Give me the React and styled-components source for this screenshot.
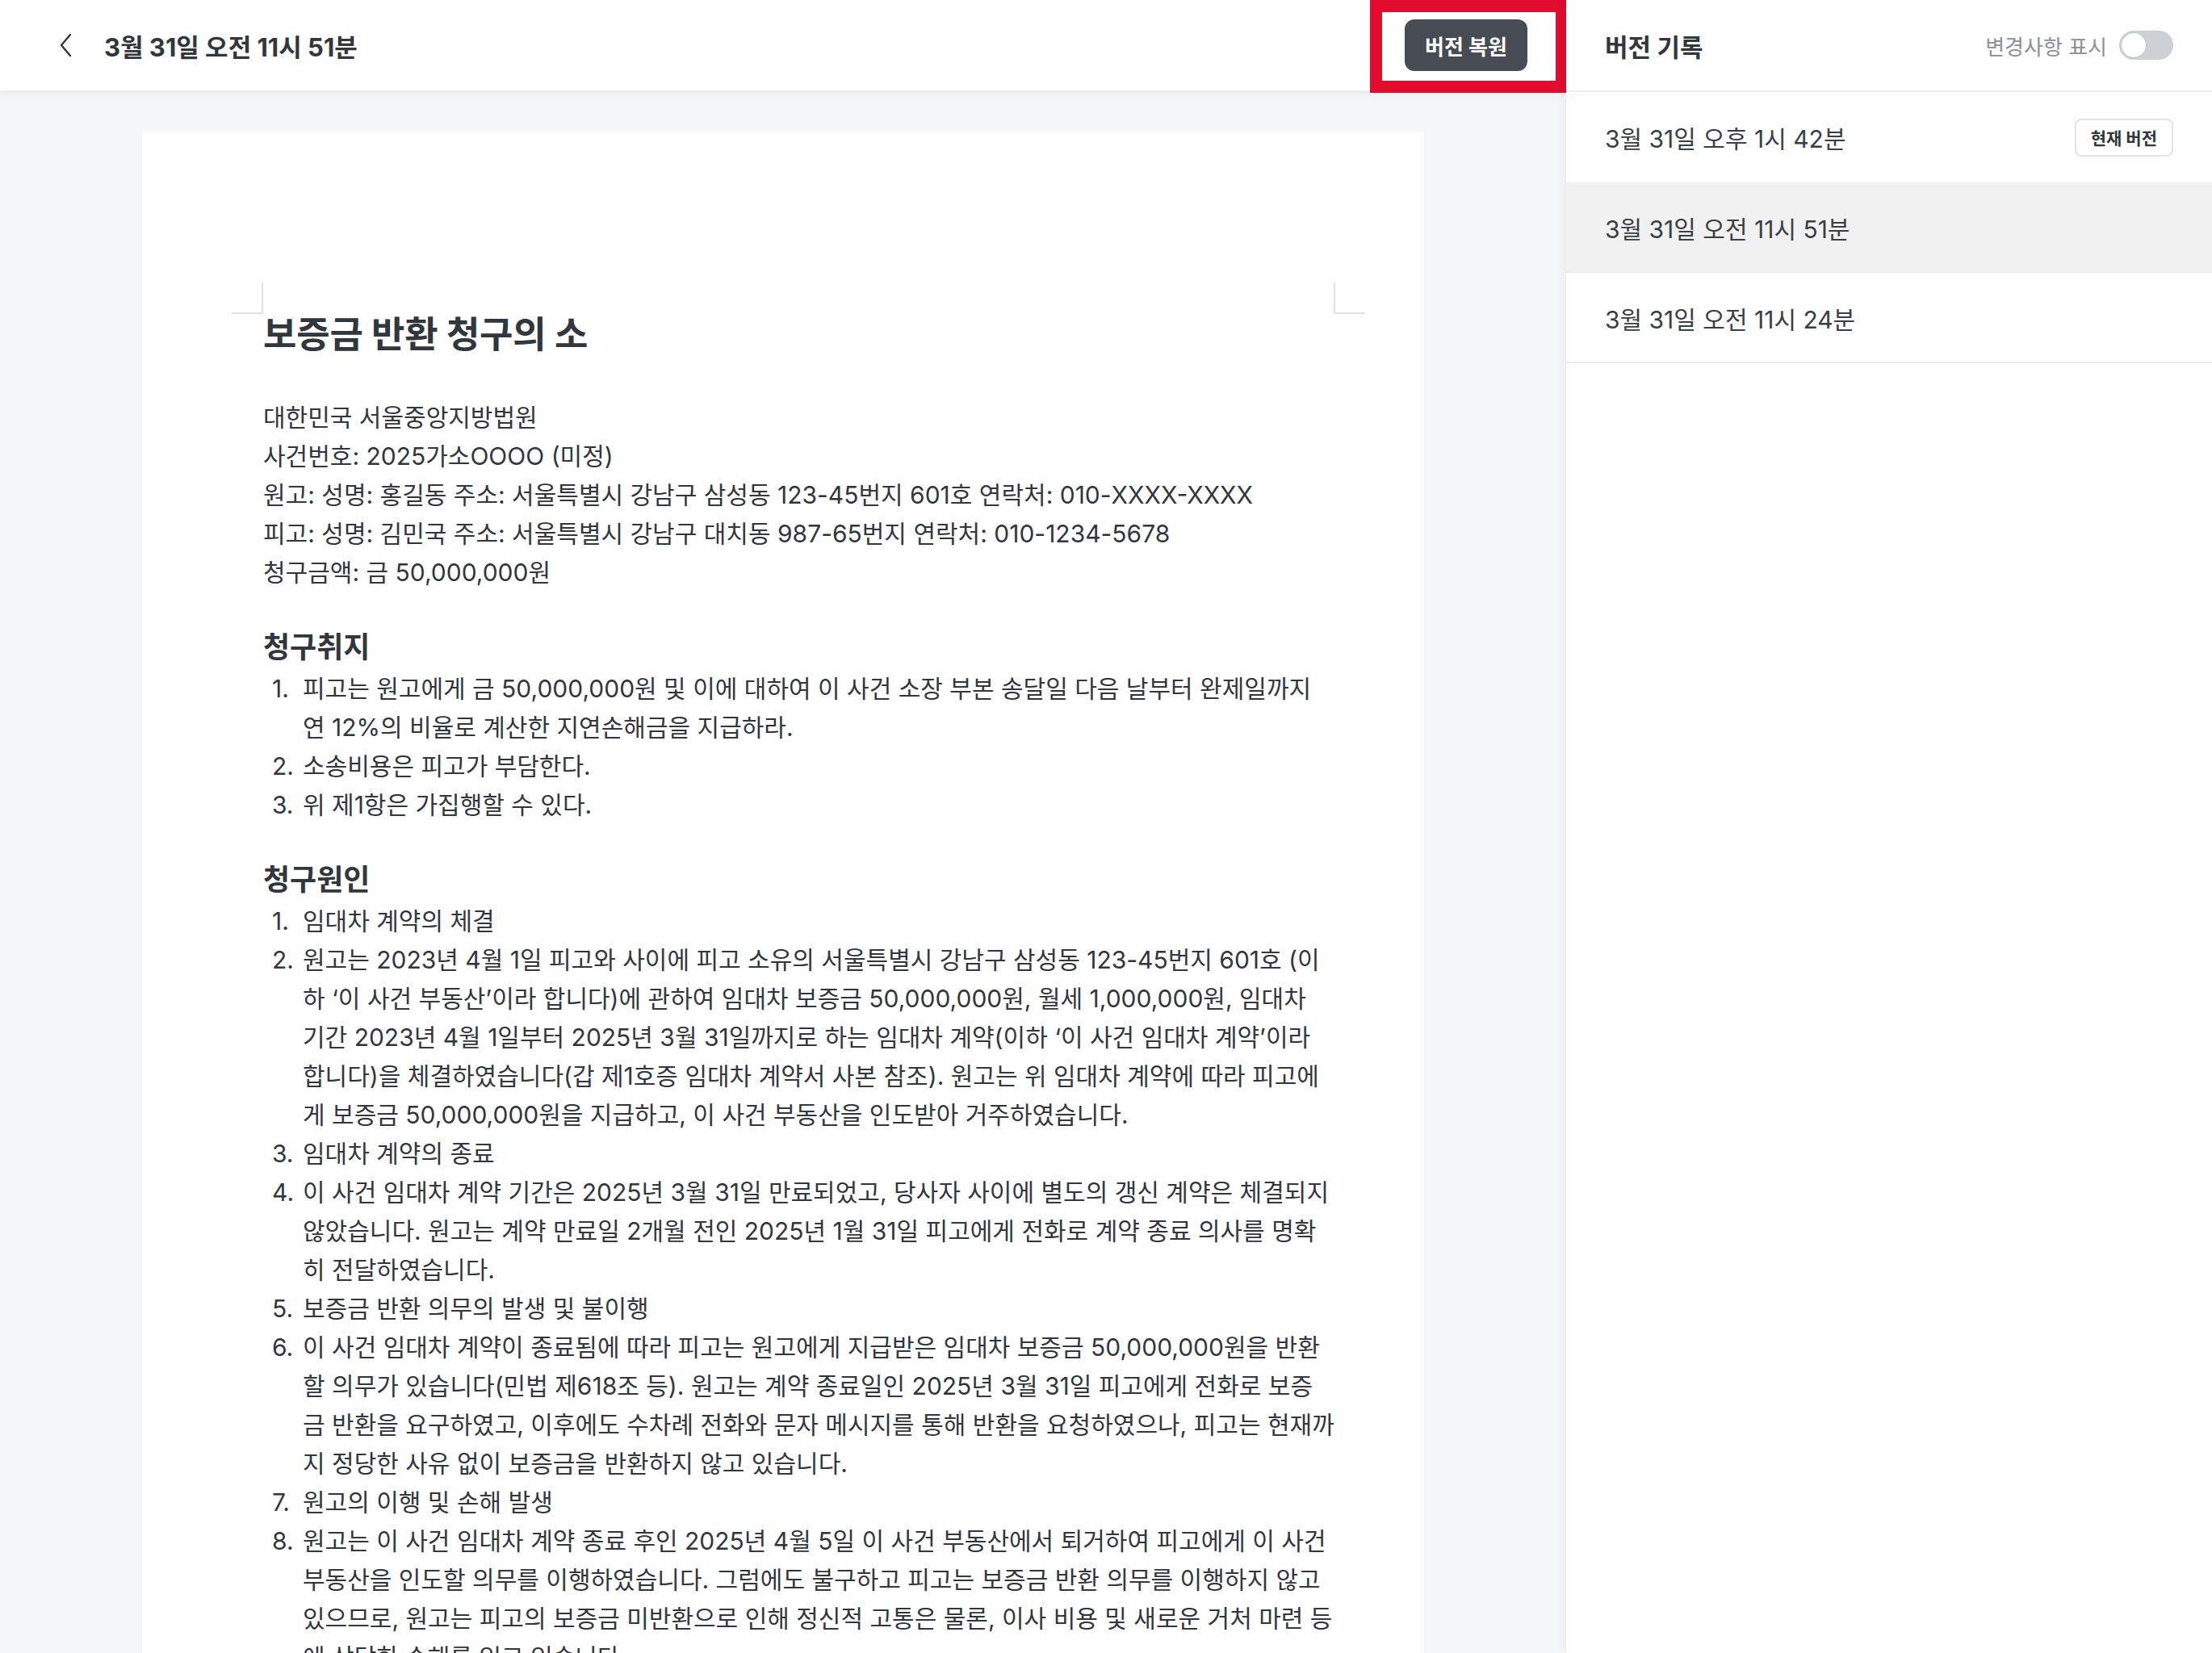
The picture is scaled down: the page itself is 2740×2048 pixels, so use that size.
import React from "react";
import styled, { createGlobalStyle } from "styled-components";

const GlobalStyle = createGlobalStyle`
  html, body {
    margin: 0;
    padding: 0;
    height: 100%;
  }
  body {
    font-family: "Inter", "Noto Sans CJK KR", sans-serif;
    color: #32363d;
    background: #ffffff;
  }
  #root {
    height: 100vh;
    overflow: hidden;
  }
`;

//styled components

const Page = styled.div`
  display: flex;
  height: 100vh;
  overflow: hidden;
`;

const Main = styled.div`
  flex: 1;
  min-width: 0;
  display: flex;
  flex-direction: column;
`;

const TopBar = styled.header`
  position: relative;
  z-index: 2;
  height: 114px;
  box-sizing: border-box;
  display: flex;
  align-items: center;
  padding: 0 48px 0 68px;
  background: #ffffff;
  border-bottom: 2px solid #eeeeee;
  box-shadow: 0 3px 8px rgba(0, 0, 0, 0.05);
`;

const BackButton = styled.button`
  display: flex;
  align-items: center;
  justify-content: center;
  width: 28px;
  height: 40px;
  padding: 0;
  border: none;
  background: none;
  color: #32363d;
  cursor: pointer;
`;

const DocTitle = styled.h1`
  margin: 0 0 0 33px;
  font-size: 31px;
  font-weight: 700;
  color: #32363d;
`;

const Spacer = styled.div`
  flex: 1;
`;

const Highlight = styled.div`
  position: relative;

  &::after {
    content: "";
    position: absolute;
    top: -24px;
    bottom: -27px;
    left: -43px;
    right: -50px;
    border: 15px solid #e20c2e;
    pointer-events: none;
  }
`;

const RestoreButton = styled.button`
  display: block;
  width: 152px;
  height: 64px;
  padding: 0;
  border: none;
  border-radius: 12px;
  background: #474c54;
  color: #ffffff;
  font-family: inherit;
  font-size: 26px;
  font-weight: 700;
  cursor: pointer;
`;

const DocArea = styled.div`
  flex: 1;
  overflow: hidden;
  background: #f5f6f8;
  padding-top: 50px;
`;

const Paper = styled.article`
  position: relative;
  width: 1588px;
  box-sizing: border-box;
  margin: 0 auto;
  padding: 225px 111px 120px 150px;
  background: #ffffff;
  box-shadow: 0 1px 3px rgba(0, 0, 0, 0.03);
`;

const CornerMark = styled.span`
  position: absolute;
  top: 186px;
  width: 39px;
  height: 39px;
  box-sizing: border-box;
  border-bottom: 2px solid #e2e2e2;
  ${(p) =>
    p.$side === "left"
      ? `left: 111px; border-right: 2px solid #e2e2e2;`
      : `left: 1476px; border-left: 2px solid #e2e2e2;`}
`;

const Title = styled.h2`
  margin: 0 0 52px;
  font-size: 45px;
  line-height: 52px;
  font-weight: 700;
  letter-spacing: -0.2px;
  color: #32363d;
`;

const InfoBlock = styled.div`
  font-size: 30px;
  line-height: 48px;
`;

const InfoLine = styled.div`
  white-space: nowrap;
`;

const SectionTitle = styled.h3`
  margin: 45px 0 3px;
  font-size: 36px;
  line-height: 48px;
  font-weight: 700;
  color: #32363d;
`;

const List = styled.ol`
  margin: 0;
  padding: 0 0 0 11px;
  list-style: none;
`;

const ListItem = styled.li`
  display: flex;
  font-size: 30px;
  line-height: 48px;
`;

const ItemNumber = styled.span`
  flex: 0 0 38px;
`;

const ItemText = styled.div`
  flex: 1;
`;

const ItemLine = styled.div`
  white-space: nowrap;
`;

const Sidebar = styled.aside`
  position: relative;
  z-index: 3;
  width: 800px;
  flex-shrink: 0;
  display: flex;
  flex-direction: column;
  background: #ffffff;
  box-shadow: -4px 0 10px rgba(0, 0, 0, 0.045);
`;

const SidebarHeader = styled.div`
  height: 114px;
  box-sizing: border-box;
  display: flex;
  align-items: center;
  justify-content: space-between;
  padding: 0 48px;
  border-bottom: 2px solid #eeeeee;
`;

const SidebarTitle = styled.h2`
  margin: 0;
  font-size: 31px;
  font-weight: 700;
  color: #32363d;
`;

const ToggleLabel = styled.label`
  display: flex;
  align-items: center;
  gap: 15px;
  font-size: 26px;
  color: #8b9097;
`;

const Toggle = styled.span`
  position: relative;
  width: 67px;
  height: 36px;
  border-radius: 18px;
  background: #cdd0d5;

  &::after {
    content: "";
    position: absolute;
    top: 3px;
    left: 3px;
    width: 30px;
    height: 30px;
    border-radius: 50%;
    background: #ffffff;
    box-shadow: 0 0 0 1px rgba(0, 0, 0, 0.06);
  }
`;

const VersionList = styled.ul`
  margin: 0;
  padding: 0;
  list-style: none;
`;

const VersionRow = styled.li`
  height: 112px;
  box-sizing: border-box;
  display: flex;
  align-items: center;
  justify-content: space-between;
  padding: 2px 48px 0;
  font-size: 30px;
  color: #3a3e45;
  background: ${(p) => (p.$selected ? "#f1f1f1" : "#ffffff")};
  border-bottom: 2px solid ${(p) => (p.$first ? "transparent" : "#ececec")};
`;

const CurrentBadge = styled.span`
  display: flex;
  align-items: center;
  height: 47px;
  box-sizing: border-box;
  padding: 0 18px;
  border: 2px solid #e4e4e4;
  border-radius: 8px;
  font-size: 21px;
  font-weight: 700;
  color: #32363d;
`;

const info = [
  "대한민국 서울중앙지방법원",
  "사건번호: 2025가소OOOO (미정)",
  "원고: 성명: 홍길동 주소: 서울특별시 강남구 삼성동 123-45번지 601호 연락처: 010-XXXX-XXXX",
  "피고: 성명: 김민국 주소: 서울특별시 강남구 대치동 987-65번지 연락처: 010-1234-5678",
  "청구금액: 금 50,000,000원",
];

const claims = [
  [
    "피고는 원고에게 금 50,000,000원 및 이에 대하여 이 사건 소장 부본 송달일 다음 날부터 완제일까지",
    "연 12%의 비율로 계산한 지연손해금을 지급하라.",
  ],
  ["소송비용은 피고가 부담한다."],
  ["위 제1항은 가집행할 수 있다."],
];

const causes = [
  ["임대차 계약의 체결"],
  [
    "원고는 2023년 4월 1일 피고와 사이에 피고 소유의 서울특별시 강남구 삼성동 123-45번지 601호 (이",
    "하 ‘이 사건 부동산’이라 합니다)에 관하여 임대차 보증금 50,000,000원, 월세 1,000,000원, 임대차",
    "기간 2023년 4월 1일부터 2025년 3월 31일까지로 하는 임대차 계약(이하 ‘이 사건 임대차 계약’이라",
    "합니다)을 체결하였습니다(갑 제1호증 임대차 계약서 사본 참조). 원고는 위 임대차 계약에 따라 피고에",
    "게 보증금 50,000,000원을 지급하고, 이 사건 부동산을 인도받아 거주하였습니다.",
  ],
  ["임대차 계약의 종료"],
  [
    "이 사건 임대차 계약 기간은 2025년 3월 31일 만료되었고, 당사자 사이에 별도의 갱신 계약은 체결되지",
    "않았습니다. 원고는 계약 만료일 2개월 전인 2025년 1월 31일 피고에게 전화로 계약 종료 의사를 명확",
    "히 전달하였습니다.",
  ],
  ["보증금 반환 의무의 발생 및 불이행"],
  [
    "이 사건 임대차 계약이 종료됨에 따라 피고는 원고에게 지급받은 임대차 보증금 50,000,000원을 반환",
    "할 의무가 있습니다(민법 제618조 등). 원고는 계약 종료일인 2025년 3월 31일 피고에게 전화로 보증",
    "금 반환을 요구하였고, 이후에도 수차례 전화와 문자 메시지를 통해 반환을 요청하였으나, 피고는 현재까",
    "지 정당한 사유 없이 보증금을 반환하지 않고 있습니다.",
  ],
  ["원고의 이행 및 손해 발생"],
  [
    "원고는 이 사건 임대차 계약 종료 후인 2025년 4월 5일 이 사건 부동산에서 퇴거하여 피고에게 이 사건",
    "부동산을 인도할 의무를 이행하였습니다. 그럼에도 불구하고 피고는 보증금 반환 의무를 이행하지 않고",
    "있으므로, 원고는 피고의 보증금 미반환으로 인해 정신적 고통은 물론, 이사 비용 및 새로운 거처 마련 등",
    "에 상당한 손해를 입고 있습니다.",
  ],
];

const versions = [
  { label: "3월 31일 오후 1시 42분", current: true },
  { label: "3월 31일 오전 11시 51분", selected: true },
  { label: "3월 31일 오전 11시 24분" },
];

const NumberedList = ({ items }) => (
  <List>
    {items.map((lines, index) => (
      <ListItem key={index}>
        <ItemNumber>{index + 1}.</ItemNumber>
        <ItemText>
          {lines.map((line, i) => (
            <ItemLine key={i}>{line}</ItemLine>
          ))}
        </ItemText>
      </ListItem>
    ))}
  </List>
);

const App = () => {
  return (
    <>
      <GlobalStyle />
      <Page>
        <Main>
          <TopBar>
            <BackButton aria-label="뒤로">
              <svg width="20" height="32" viewBox="0 0 20 32" fill="none">
                <path
                  d="M15 3 L4 16 L15 29"
                  stroke="currentColor"
                  strokeWidth="2.4"
                  strokeLinecap="round"
                  strokeLinejoin="round"
                />
              </svg>
            </BackButton>
            <DocTitle>3월 31일 오전 11시 51분</DocTitle>
            <Spacer />
            <Highlight>
              <RestoreButton>버전 복원</RestoreButton>
            </Highlight>
          </TopBar>

          <DocArea>
            <Paper>
              <CornerMark $side="left" />
              <CornerMark $side="right" />
              <Title>보증금 반환 청구의 소</Title>
              <InfoBlock>
                {info.map((line) => (
                  <InfoLine key={line}>{line}</InfoLine>
                ))}
              </InfoBlock>

              <SectionTitle>청구취지</SectionTitle>
              <NumberedList items={claims} />

              <SectionTitle>청구원인</SectionTitle>
              <NumberedList items={causes} />
            </Paper>
          </DocArea>
        </Main>

        <Sidebar>
          <SidebarHeader>
            <SidebarTitle>버전 기록</SidebarTitle>
            <ToggleLabel>
              변경사항 표시
              <Toggle />
            </ToggleLabel>
          </SidebarHeader>
          <VersionList>
            {versions.map((v, index) => (
              <VersionRow
                key={v.label}
                $selected={v.selected}
                $first={index === 0}
              >
                {v.label}
                {v.current && <CurrentBadge>현재 버전</CurrentBadge>}
              </VersionRow>
            ))}
          </VersionList>
        </Sidebar>
      </Page>
    </>
  );
};

export default App;
